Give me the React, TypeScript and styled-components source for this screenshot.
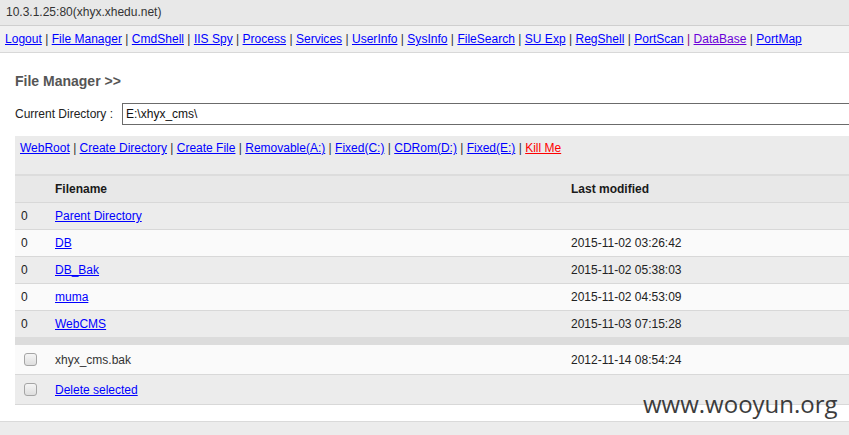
import React from "react"
import styled, { createGlobalStyle } from "styled-components"

const GlobalStyle = createGlobalStyle`
    html, body {
        margin: 0;
        padding: 0;
        background: #fff;
        overflow: hidden;
    }
    body {
        font-family: "Liberation Sans", Arial, sans-serif;
        font-size: 12px;
        color: #222;
    }
`

const Page = styled.div`
    position: relative;
    min-height: 435px;
`

const TopBar = styled.div`
    height: 25px;
    line-height: 25px;
    padding-left: 6px;
    background: #e8e8e8;
    border-bottom: 1px solid #cfcfcf;
    color: #333;
`

const NavBar = styled.div`
    height: 26px;
    line-height: 27px;
    padding-left: 5px;
    background: #f1f1f1;
    border-bottom: 1px solid #d8d8d8;
    white-space: nowrap;
    letter-spacing: 0.02px;
`

const Link = styled.a<{ $color?: string }>`
    color: ${p => p.$color || "#0000ff"};
    text-decoration: underline;
    cursor: pointer;
`

const Sep = styled.span<{ $color?: string }>`
    color: ${p => p.$color || "#333"};
`

const Main = styled.div`
    padding: 20px 0 0 15px;
    overflow: hidden;
`

const Title = styled.h2`
    margin: 0;
    font-size: 14px;
    line-height: 16px;
    font-weight: bold;
    color: #555;
`

const DirRow = styled.div`
    display: flex;
    align-items: center;
    margin-top: 14px;
`

const Label = styled.label`
    color: #222;
    margin-right: 9px;
    white-space: nowrap;
`

const DirInput = styled.input`
    flex: 1;
    height: 22px;
    box-sizing: border-box;
    margin: 0 -6px 0 0;
    padding: 0 3px;
    border: 1px solid #6b6b6b;
    font-family: "Liberation Sans", Arial, sans-serif;
    font-size: 12px;
    color: #111;
    outline: none;
`

const ActionBar = styled.div`
    margin-top: 11px;
    height: 38px;
    box-sizing: border-box;
    padding: 5px 5px 0;
    line-height: 14px;
    background: #ebebeb;
    white-space: nowrap;
`

const FileTable = styled.div`
    border-top: 2px solid #dcdcdc;
`

const Row = styled.div<{ $alt?: boolean; $tall?: boolean; $head?: boolean }>`
    display: grid;
    grid-template-columns: 40px 516px 1fr;
    align-items: center;
    height: ${p => (p.$tall ? 29 : 26)}px;
    background: ${p => (p.$head ? "#e8e8e8" : p.$alt ? "#fafafa" : "#ececec")};
    border-bottom: 1px solid #d8d8d8;
    font-weight: ${p => (p.$head ? "bold" : "normal")};
    color: ${p => (p.$head ? "#1a1a1a" : "#222")};
`

const Cell = styled.div<{ $first?: boolean }>`
    padding-left: ${p => (p.$first ? 6 : 0)}px;
    white-space: nowrap;
`

const Divider = styled.div`
    height: 8px;
    background: #dcdcdc;
    margin-top: -1px;
`

const Check = styled.input.attrs({ type: "checkbox" })`
    appearance: none;
    -webkit-appearance: none;
    display: block;
    width: 13px;
    height: 13px;
    margin: 0 0 0 3px;
    border: 1px solid #a5a5a5;
    border-radius: 3px;
    background: linear-gradient(#f5f5f5, #dedede);
    box-sizing: border-box;
`

const FileName = styled.span`
    color: #333;
`

const Footer = styled.div`
    margin-top: 16px;
    height: 14px;
    background: #ececec;
    border-top: 1px solid #dadada;
`

const Watermark = styled.div`
    position: absolute;
    left: 643px;
    top: 389px;
    font-family: "Open Sans", "Noto Sans", sans-serif;
    font-size: 24px;
    line-height: 30px;
    color: #3c3c3c;
    pointer-events: none;
`

const navLinks = [
    "Logout", "File Manager", "CmdShell", "IIS Spy", "Process", "Services", "UserInfo",
    "SysInfo", "FileSearch", "SU Exp", "RegShell", "PortScan", "DataBase", "PortMap",
]

const actions: { label: string; color?: string }[] = [
    { label: "WebRoot" },
    { label: "Create Directory" },
    { label: "Create File" },
    { label: "Removable(A:)" },
    { label: "Fixed(C:)" },
    { label: "CDRom(D:)" },
    { label: "Fixed(E:)" },
    { label: "Kill Me", color: "#ff0000" },
]

const dirs = [
    { name: "Parent Directory", time: "" },
    { name: "DB", time: "2015-11-02 03:26:42" },
    { name: "DB_Bak", time: "2015-11-02 05:38:03" },
    { name: "muma", time: "2015-11-02 04:53:09" },
    { name: "WebCMS", time: "2015-11-03 07:15:28" },
]

export default function App() {
    return (
        <Page>
            <GlobalStyle />
            <TopBar>10.3.1.25:80(xhyx.xhedu.net)</TopBar>

            <NavBar>
                {navLinks.map((l, i) => (
                    <React.Fragment key={l}>
                        {i > 0 && <Sep $color={l === "DataBase" ? "#800080" : undefined}> | </Sep>}
                        <Link $color={l === "DataBase" ? "#6a00d8" : undefined}>{l}</Link>
                    </React.Fragment>
                ))}
            </NavBar>

            <Main>
                <Title>File Manager &gt;&gt;</Title>

                <DirRow>
                    <Label>Current Directory :</Label>
                    <DirInput defaultValue="E:\xhyx_cms\" />
                </DirRow>

                <ActionBar>
                    {actions.map((a, i) => (
                        <React.Fragment key={a.label}>
                            {i > 0 && <Sep> | </Sep>}
                            <Link $color={a.color}>{a.label}</Link>
                        </React.Fragment>
                    ))}
                </ActionBar>

                <FileTable>
                    <Row $head>
                        <Cell $first />
                        <Cell>Filename</Cell>
                        <Cell>Last modified</Cell>
                    </Row>
                    {dirs.map((d, i) => (
                        <Row key={d.name} $alt={i % 2 === 1}>
                            <Cell $first>0</Cell>
                            <Cell><Link>{d.name}</Link></Cell>
                            <Cell>{d.time}</Cell>
                        </Row>
                    ))}
                    <Divider />
                    <Row $alt $tall>
                        <Cell $first><Check /></Cell>
                        <Cell><FileName>xhyx_cms.bak</FileName></Cell>
                        <Cell>2012-11-14 08:54:24</Cell>
                    </Row>
                    <Row $tall>
                        <Cell $first><Check /></Cell>
                        <Cell><Link>Delete selected</Link></Cell>
                        <Cell />
                    </Row>
                </FileTable>
            </Main>

            <Footer />
            <Watermark>www.wooyun.org</Watermark>
        </Page>
    )
}
